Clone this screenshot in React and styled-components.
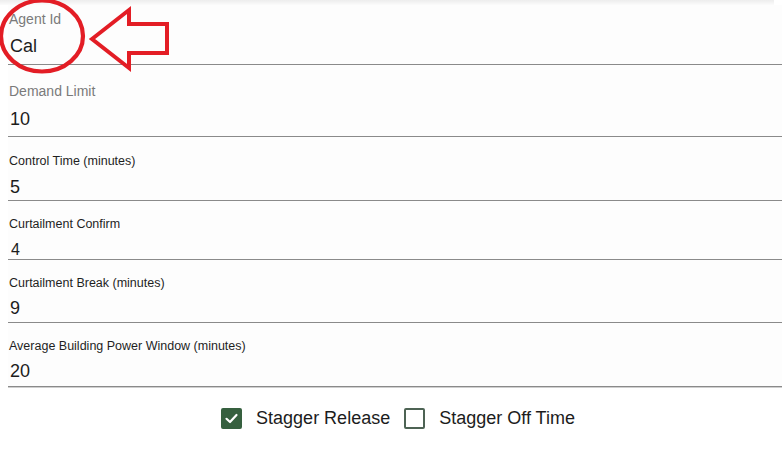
import React from "react";
import styled, { createGlobalStyle } from "styled-components";

const fields = [
  { label: "Agent Id", value: "Cal", floating: true, top: 6, gap: 7, bottom: 7 },
  { label: "Demand Limit", value: "10", floating: true, top: 18, gap: 8, bottom: 6 },
  { label: "Control Time (minutes)", value: "5", top: 17, gap: 7, bottom: 2 },
  { label: "Curtailment Confirm", value: "4", small: true, top: 16, gap: 9, bottom: 0 },
  { label: "Curtailment Break (minutes)", value: "9", top: 16, gap: 6, bottom: 3 },
  { label: "Average Building Power Window (minutes)", value: "20", top: 16, gap: 6, bottom: 4 },
];

const checks = [
  { label: "Stagger Release", checked: true },
  { label: "Stagger Off Time", checked: false },
];

function App() {
  return (
    <>
      <GlobalStyle />
      <Page>
        <ShadowStrip />
        {fields.map((f) => (
          <Field key={f.label} $top={f.top} $bottom={f.bottom}>
            <Label $floating={f.floating}>{f.label}</Label>
            <ValueInput
              $gap={f.gap}
              $small={f.small}
              defaultValue={f.value}
              readOnly
            />
          </Field>
        ))}
        <CheckRow>
          {checks.map((c) => (
            <CheckItem key={c.label}>
              <Box $checked={c.checked}>
                {c.checked && (
                  <svg width="15" height="15" viewBox="0 0 15 15">
                    <polyline
                      points="2.5,7.8 6,11 12.5,4"
                      fill="none"
                      stroke="#fff"
                      strokeWidth="2.2"
                      strokeLinecap="round"
                      strokeLinejoin="round"
                    />
                  </svg>
                )}
              </Box>
              <CheckText>{c.label}</CheckText>
            </CheckItem>
          ))}
        </CheckRow>
        <Annotation width="782" height="459" viewBox="0 0 782 459">
          <ellipse
            cx="42"
            cy="36"
            rx="41"
            ry="35.5"
            fill="none"
            stroke="#e31d25"
            strokeWidth="4.2"
          />
          <polygon
            points="92,39 129,10 129,24 167,24 167,53 129,53 129,68"
            fill="none"
            stroke="#e31d25"
            strokeWidth="4"
            strokeLinejoin="miter"
          />
        </Annotation>
      </Page>
    </>
  );
}

const GlobalStyle = createGlobalStyle`
  html, body {
    margin: 0;
    padding: 0;
    background: #ffffff;
  }
  body {
    font-family: "Liberation Sans", Arial, sans-serif;
    color: #212121;
  }
`;

const Page = styled.div`
  position: relative;
  width: 782px;
  height: 459px;
  overflow: hidden;
  box-sizing: border-box;
  padding-left: 8px;
  display: flex;
  flex-direction: column;
`;

const ShadowStrip = styled.div`
  height: 5px;
  margin-left: -8px;
  margin-right: 8px;
  background: linear-gradient(
    to bottom,
    rgba(0, 0, 0, 0.07),
    rgba(0, 0, 0, 0.015)
  );
`;

const Field = styled.div`
  display: flex;
  flex-direction: column;
  padding-top: ${(p) => p.$top}px;
  padding-bottom: ${(p) => p.$bottom}px;
  border-bottom: 1px solid #8a8a8a;
  box-shadow: 0 1px 0 #cfcfcf;
  background: #fdfdfd;
`;

const Label = styled.label`
  display: block;
  font-size: ${(p) => (p.$floating ? "14px" : "12.5px")};
  line-height: ${(p) => (p.$floating ? "17px" : "15px")};
  color: ${(p) => (p.$floating ? "#7a7a7a" : "#1f1f1f")};
  padding-left: 1px;
`;

const ValueInput = styled.input`
  display: block;
  margin: ${(p) => p.$gap}px 0 0;
  padding: 0 0 0 ${(p) => (p.$small ? "3px" : "2px")};
  border: none;
  outline: none;
  background: transparent;
  width: 100%;
  box-sizing: border-box;
  font-family: "Liberation Sans", Arial, sans-serif;
  font-size: ${(p) => (p.$small ? "16px" : "18px")};
  height: ${(p) => (p.$small ? "18px" : "22px")};
  line-height: ${(p) => (p.$small ? "18px" : "22px")};
  color: #1c1c1c;
`;

const CheckRow = styled.div`
  display: flex;
  justify-content: center;
  align-items: center;
  gap: 14px;
  margin-top: 20px;
  padding-left: 6px;
`;

const CheckItem = styled.label`
  display: flex;
  align-items: center;
  gap: 14px;
`;

const Box = styled.span`
  width: 21px;
  height: 21px;
  box-sizing: border-box;
  border-radius: 2px;
  display: flex;
  align-items: center;
  justify-content: center;
  background: ${(p) => (p.$checked ? "#36603f" : "#ffffff")};
  border: 2px solid ${(p) => (p.$checked ? "#36603f" : "#4d6354")};
`;

const CheckText = styled.span`
  font-size: 18px;
  line-height: 22px;
  color: #1c1c1c;
`;

const Annotation = styled.svg`
  position: absolute;
  top: 0;
  left: 0;
  pointer-events: none;
`;

export default App;
